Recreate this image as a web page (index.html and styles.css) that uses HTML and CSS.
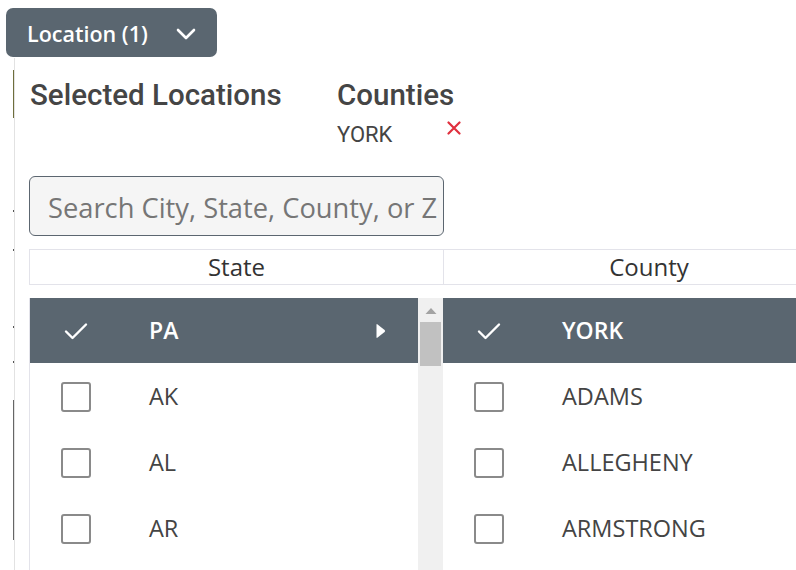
FILE: index.html
```html
<!DOCTYPE html>
<html lang="en">

<head>
  <meta charset="UTF-8">
  <title>Location Filter</title>
  <link rel="stylesheet" href="styles.css">
</head>

<body>

  <div class="page">
    <button class="filtro-btn" type="button">
      <span>Location (1)</span>
      <svg class="chevron" width="20" height="12" viewBox="0 0 20 12">
        <path d="M2 2 L10 10 L18 2" fill="none" stroke="#fff" stroke-width="2.6" stroke-linecap="round" stroke-linejoin="round"/>
      </svg>
    </button>

    <div class="fila">
      <!-- restos de la pagina de fondo -->
      <div class="fondo">
        <span class="marca olivo"></span>
        <span class="punto p1"></span>
        <span class="punto p2"></span>
        <span class="punto p3"></span>
        <span class="punto p4"></span>
        <span class="marca gris"></span>
      </div>

      <div class="panel">
        <div class="seleccion">
          <h2>Selected Locations</h2>
          <div class="grupo">
            <h3>Counties</h3>
            <div class="chip">
              <span>YORK</span>
              <svg class="quitar" width="14" height="14" viewBox="0 0 14 14">
                <path d="M1.5 1.5 L12.5 12.5 M12.5 1.5 L1.5 12.5" stroke="#e0303e" stroke-width="2.2" stroke-linecap="round"/>
              </svg>
            </div>
          </div>
        </div>

        <input class="buscar" type="text" placeholder="Search City, State, County, or Zip">

        <div class="tabla">
          <div class="cabecera">
            <div class="th th-estado">State</div>
            <div class="th th-condado">County</div>
          </div>

          <div class="listas">
            <div class="lista estados">
              <div class="filas">
                <div class="item activo">
                  <svg class="check" width="30" height="30" viewBox="0 0 30 30">
                    <path d="M5 15.5 L11.5 22 L25 8.5" fill="none" stroke="#fff" stroke-width="2.4" stroke-linecap="round" stroke-linejoin="round"/>
                  </svg>
                  <span class="nombre">PA</span>
                  <svg class="flecha" width="11" height="16" viewBox="0 0 11 16">
                    <path d="M1.5 1.8 Q1.5 0.6 2.6 1.4 L9.6 7 Q10.6 8 9.6 9 L2.6 14.6 Q1.5 15.4 1.5 14.2 Z" fill="#fff"/>
                  </svg>
                </div>
                <div class="item"><span class="caja"></span><span class="nombre">AK</span></div>
                <div class="item"><span class="caja"></span><span class="nombre">AL</span></div>
                <div class="item"><span class="caja"></span><span class="nombre">AR</span></div>
              </div>
              <div class="scroll">
                <svg class="scroll-arriba" width="12" height="8" viewBox="0 0 12 8">
                  <path d="M0.5 7 L6 1 L11.5 7 Z" fill="#a3a3a3"/>
                </svg>
                <div class="scroll-barra"></div>
              </div>
            </div>

            <div class="lista condados">
              <div class="filas">
                <div class="item activo">
                  <svg class="check" width="30" height="30" viewBox="0 0 30 30">
                    <path d="M5 15.5 L11.5 22 L25 8.5" fill="none" stroke="#fff" stroke-width="2.4" stroke-linecap="round" stroke-linejoin="round"/>
                  </svg>
                  <span class="nombre">YORK</span>
                </div>
                <div class="item"><span class="caja"></span><span class="nombre">ADAMS</span></div>
                <div class="item"><span class="caja"></span><span class="nombre">ALLEGHENY</span></div>
                <div class="item"><span class="caja"></span><span class="nombre">ARMSTRONG</span></div>
              </div>
            </div>
          </div>
        </div>
      </div>
    </div>
  </div>

</body>

</html>
```

FILE: styles.css
```css
body {
  margin: 0;
  background: #fff;
  font-family: "Open Sans", sans-serif;
  color: #444;
  overflow: hidden;
}

.page {
  width: 796px;
  height: 570px;
  overflow: hidden;
  padding-top: 8px;
}

.filtro-btn {
  display: flex;
  align-items: center;
  justify-content: space-between;
  margin-left: 6px;
  width: 211px;
  height: 49px;
  padding: 1px 21px 0 21px;
  background: #5a6670;
  color: #fff;
  border: none;
  border-radius: 7px;
  font-family: "Open Sans", sans-serif;
  font-size: 21.5px;
  font-weight: 600;
  cursor: pointer;
}

.chevron {
  display: block;
  margin-top: 2px;
}

.fila {
  display: flex;
  margin-top: 1px;
}

.fondo {
  width: 14px;
  flex: none;
  display: flex;
  flex-direction: column;
}

.marca,
.punto {
  display: block;
  width: 1px;
  margin-left: 13px;
}

.olivo {
  margin-top: 12px;
  height: 48px;
  background: #6e6e3c;
}

.punto {
  height: 2px;
  background: #555;
}

.p1 { margin-top: 92px; }
.p2 { margin-top: 37px; }
.p3 { margin-top: 75px; }
.p4 { margin-top: 33px; }

.gris {
  margin-top: 37px;
  height: 140px;
  background: #666;
}

.panel {
  width: 900px;
  flex: none;
  border-left: 1px solid #e2e2e2;
  padding: 1px 0 0 14px;
  background: #fff;
}

.seleccion {
  display: flex;
  padding-top: 19px;
}

.seleccion h2,
.seleccion h3 {
  margin: 0;
  font-family: Roboto, sans-serif;
  font-weight: 500;
  font-size: 29.5px;
  line-height: 34px;
  color: #454545;
}

.seleccion h2 {
  width: 307px;
  padding-left: 1px;
}

.chip {
  display: flex;
  align-items: flex-start;
  font-family: Roboto, sans-serif;
  font-size: 22px;
  line-height: 30px;
  color: #444;
  margin-top: 8px;
}

.quitar {
  display: block;
  margin-left: 55px;
  margin-top: 1px;
}

.buscar {
  display: block;
  box-sizing: border-box;
  width: 415px;
  height: 60px;
  margin-top: 26px;
  padding: 2px 4px 0 18px;
  border: 1px solid #5c6670;
  border-radius: 6px;
  background: #f5f5f5;
  font-family: "Open Sans", sans-serif;
  font-size: 27.3px;
  color: #333;
}

.buscar::placeholder {
  color: #767676;
}

.tabla {
  margin-top: 13px;
}

.cabecera {
  display: flex;
  height: 34px;
  border-top: 1px solid #e3e3ea;
  border-bottom: 1px solid #e3e3ea;
}

.th {
  display: flex;
  align-items: center;
  justify-content: center;
  font-size: 24px;
  color: #333;
  padding-bottom: 2px;
}

.th-estado {
  width: 413px;
  border-left: 1px solid #e3e3ea;
  border-right: 1px solid #e3e3ea;
}

.th-condado {
  width: 410px;
}

.listas {
  display: flex;
  margin-top: 13px;
}

.lista {
  display: flex;
  height: 280px;
}

.estados {
  width: 413px;
  border-left: 1px solid #e3e3ea;
}

.condados {
  width: 440px;
}

.filas {
  flex: 1;
}

.item {
  display: flex;
  align-items: center;
  height: 66px;
  padding-left: 31px;
  font-size: 23.5px;
  color: #444;
}

.item.activo {
  background: #5a6670;
  color: #fff;
  font-weight: 600;
  font-size: 23px;
  height: 65px;
  margin-bottom: 1px;
}

.caja {
  box-sizing: border-box;
  width: 30px;
  height: 30px;
  border: 2.5px solid #8a8a8a;
  border-radius: 3px;
  flex: none;
}

.check {
  display: block;
  flex: none;
}

.nombre {
  margin-left: 58px;
  flex: 1;
  padding-bottom: 2px;
}

.flecha {
  display: block;
  margin-right: 32px;
}

.scroll {
  width: 25px;
  background: #f0f0f0;
  display: flex;
  flex-direction: column;
  align-items: center;
}

.scroll-arriba {
  display: block;
  margin-top: 9px;
}

.scroll-barra {
  width: 21px;
  height: 44px;
  margin-top: 7px;
  background: #c1c1c1;
}
```
